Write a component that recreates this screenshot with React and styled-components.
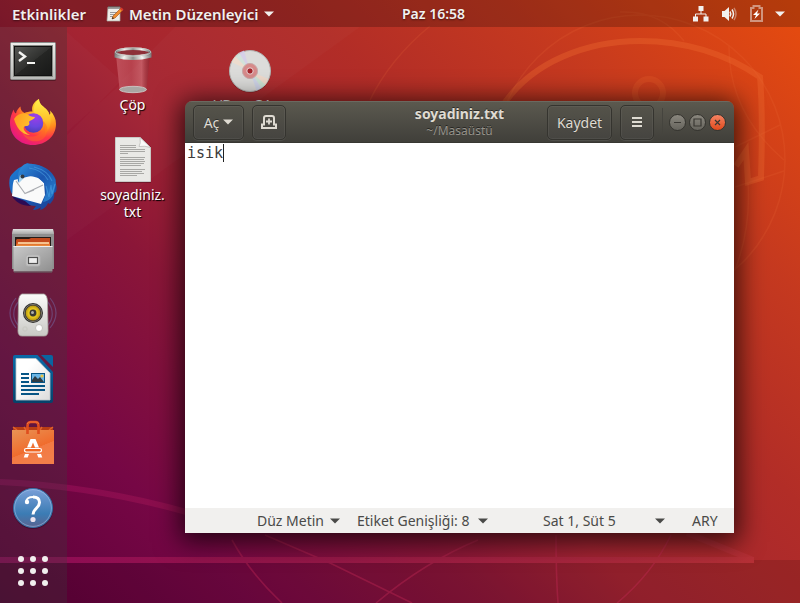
import React from "react";
import styled, { createGlobalStyle, css } from "styled-components";

const GlobalStyle = createGlobalStyle`
  * { box-sizing: border-box; }
  html, body, #root { height: 100%; margin: 0; }
  body { overflow: hidden; }
  body, button, select, textarea {
    font-family: "Noto Sans", "Open Sans", sans-serif;
    font-size: 14px;
  }
  button, select { margin: 0; padding: 0; border: 0; background: none; color: inherit; }
  svg { display: block; flex: none; }
`;

const Screen = styled.div`
  position: relative;
  display: flex;
  flex-direction: column;
  min-height: 100vh;
  background: linear-gradient(45deg, #5c0038 0%, #760745 18%, #8b1638 35%, #a42432 46%, #b22d27 64%, #c5391f 79%, #e74c0e 100%);
`;

const WallpaperArt = styled.svg`
  position: absolute;
  inset: 0;
  width: 100%;
  height: 100%;
`;

const TopBar = styled.header`
  position: relative;
  display: flex;
  align-items: center;
  height: 27px;
  background: rgba(0, 0, 0, 0.21);
  color: #f2f0ee;
  text-shadow: 0 1px 2px rgba(0, 0, 0, 0.5);
`;

const TopLeft = styled.div`
  display: flex;
  flex: none;
  align-items: center;
  gap: 20px;
  width: 50%;
  padding-left: 12px;
`;

const TopButton = styled.button`
  display: flex;
  align-items: center;
  gap: 5px;
  height: 27px;
  font-weight: 600;
  font-size: 15px;
  text-shadow: inherit;
  white-space: nowrap;
`;

const Clock = styled(TopButton)`
  padding-left: 2px;
  font-size: 14px;
`;

const StatusArea = styled.button`
  display: flex;
  align-items: center;
  gap: 12px;
  margin-left: auto;
  padding-right: 15px;
`;

const Body = styled.div`
  position: relative;
  display: flex;
  flex: 1;
`;

const Dock = styled.nav`
  display: flex;
  flex-direction: column;
  align-items: center;
  gap: 16px;
  width: 67px;
  padding: 8px 1px 8px 0;
  background: rgba(60, 60, 60, 0.3);
`;

const DockButton = styled.button`
  width: 48px;
  height: 48px;
`;

const Desktop = styled.main`
  position: relative;
  flex: 1;
  padding: 19px 7px;
`;

const IconGrid = styled.div`
  display: grid;
  grid-template-columns: repeat(2, 117px);
  grid-auto-rows: 90px;
`;

const DesktopItem = styled.button`
  display: flex;
  flex-direction: column;
  align-items: center;
  gap: 2px;
  height: 48px;
`;

const ItemLabel = styled.span`
  width: 76px;
  color: #fff;
  line-height: 17px;
  text-align: center;
  overflow-wrap: break-word;
  text-shadow: 1px 1px 1px #000;
`;

const Window = styled.section`
  position: absolute;
  top: 74px;
  right: 66px;
  bottom: 70px;
  left: 118px;
  display: flex;
  flex-direction: column;
  border-radius: 7px 7px 0 0;
  box-shadow: 0 4px 26px 5px rgba(0, 0, 0, 0.7);
  overflow: hidden;
`;

const HeaderBar = styled.div`
  display: grid;
  grid-template-columns: 1fr auto 1fr;
  align-items: center;
  height: 42px;
  padding: 0 8px;
  background: linear-gradient(#5b594f, #403f3a);
  border-top: 1px solid #6b6960;
  border-bottom: 1px solid #383732;
  color: #dfdbd2;
`;

const Group = styled.div`
  display: flex;
  align-items: center;
  gap: 8px;
  justify-content: ${(p) => (p.$end ? "flex-end" : "flex-start")};
`;

const HeaderButton = styled.button`
  display: flex;
  align-items: center;
  justify-content: center;
  gap: 4px;
  height: 35px;
  min-width: ${(p) => p.$width || 34}px;
  padding: 0 8px;
  border: 1px solid #35342f;
  border-radius: 5px;
  background: linear-gradient(#55534a, #454440);
  box-shadow: inset 0 0 0 1px rgba(255, 255, 255, 0.05), 0 1px 0 rgba(255, 255, 255, 0.08);
  color: #dfdbd2;
  text-shadow: 0 -1px 0 rgba(0, 0, 0, 0.4);
`;

const TitleBlock = styled.div`
  text-align: center;
  text-shadow: 0 -1px 0 rgba(0, 0, 0, 0.5);
`;

const Title = styled.h1`
  margin: 0;
  font-size: 14px;
  font-weight: 700;
  line-height: 18px;
`;

const Subtitle = styled.div`
  font-size: 12px;
  line-height: 16px;
  color: #95928a;
`;

const WindowControls = styled.div`
  display: flex;
  gap: 3px;
  padding-left: 6px;
  border-left: 1px solid #45443e;
  height: 28px;
  align-items: center;
`;

const WindowButton = styled.button`
  width: 17px;
  height: 17px;
  border-radius: 50%;
  border: 1px solid #35342f;
  background: linear-gradient(#8a877e, #66645d);
  ${(p) =>
    p.$close &&
    css`
      background: linear-gradient(#f58363, #df4a1c);
    `}
`;

const Editor = styled.div`
  display: grid;
  flex: 1;
  background: #fff;
`;

const editorText = css`
  grid-area: 1 / 1;
  margin: 0;
  padding: 1px 2px;
  font-family: "DejaVu Sans Mono", monospace;
  font-size: 15px;
  line-height: 18px;
`;

const TextBox = styled.textarea`
  ${editorText}
  width: 100%;
  height: 100%;
  border: 0;
  outline: 0;
  resize: none;
  background: transparent;
  color: #3c3c3c;
  caret-color: transparent;
`;

const CaretLine = styled.div`
  ${editorText}
  display: flex;
  align-items: flex-start;
  pointer-events: none;
`;

const Caret = styled.span`
  width: 1px;
  height: 18px;
  margin-left: 4ch;
  background: #222;
`;

const StatusBar = styled.footer`
  display: flex;
  align-items: center;
  justify-content: flex-end;
  height: 25px;
  padding-right: 14px;
  background: #f1f0ee;
  color: #4a4a48;
`;

const Picker = styled.label`
  display: flex;
  align-items: center;
  gap: 5px;
  margin-right: 17px;
`;

const PickerSelect = styled.select`
  appearance: none;
  width: ${(p) => p.$width}px;
  height: 24px;
  outline: 0;
`;

const PositionButton = styled.button`
  display: flex;
  align-items: center;
  justify-content: space-between;
  width: 122px;
  height: 24px;
  margin-left: 38px;
`;

const Mode = styled.span`
  width: 28px;
  margin-left: 27px;
`;

const Arrow = () => (
  <svg width="10" height="6" viewBox="0 0 10 6" aria-hidden="true">
    <path d="M0 .5h10L5 5.5z" fill="currentColor" />
  </svg>
);

const Wallpaper = () => (
  <WallpaperArt viewBox="0 0 800 603" preserveAspectRatio="xMidYMid slice" aria-hidden="true">
    <defs>
      <linearGradient id="beam" x1="0" x2="754" y1="0" y2="0" gradientUnits="userSpaceOnUse">
        <stop offset="0" stopColor="#8d0a56" />
        <stop offset=".45" stopColor="#971847" />
        <stop offset="1" stopColor="#b63036" />
      </linearGradient>
    </defs>
    <path d="M0 563H754V560H800V603H0z" fill="#000" opacity=".12" />
    <path d="M67 32L123 82 67 132zM175 27L67 135V240L360 27z" fill="#fff" opacity=".018" />
    <g fill="none" stroke="#f0703c" strokeWidth="1.5" opacity=".16">
      <circle cx="640" cy="160" r="145" />
      <path d="M370 100Q390 59 430 26M729 45Q728 112 784 160M735 147L780 125M735 187L784 171M748 183Q751 228 735 270M620 12Q660 10 684 41" />
    </g>
    <g fill="none" stroke="#c52a58" strokeWidth="1.6" opacity=".38">
      <path d="M232 540Q250 573 282 603M265 535L330 563 412 603M478 540Q425 562 376 603M556 535Q556 575 558 603M671 535Q652 574 617 603" />
    </g>
    <g fill="none" stroke="#ee6a30" strokeWidth="6" opacity=".38">
      <path d="M500 110C530 60 590 41 640 41C695 41 735 60 760 77Q763 110 761 178L748 182 746 151 736 166" />
      <circle cx="649" cy="93" r="14" opacity=".6" />
    </g>
    <path d="M0 560H754" stroke="url(#beam)" strokeWidth="6" />
    <path d="M0 482Q95 486 190 513M687 533L753 560" fill="none" stroke="url(#beam)" strokeWidth="6" opacity=".75" />
  </WallpaperArt>
);

const TerminalIcon = () => (
  <svg width="48" height="48" viewBox="0 0 48 48">
    <defs>
      <linearGradient id="termGlass" x1="0" y1="0" x2="1" y2="1">
        <stop offset="0" stopColor="#555653" /><stop offset=".5" stopColor="#30312f" /><stop offset=".51" stopColor="#252624" /><stop offset="1" stopColor="#181918" />
      </linearGradient>
      <linearGradient id="termFrame" x1="0" y1="0" x2="0" y2="1">
        <stop offset="0" stopColor="#eeeeec" /><stop offset="1" stopColor="#b9bab8" />
      </linearGradient>
    </defs>
    <rect x="1" y="8" width="46" height="38" rx="1.5" fill="#000" opacity=".3" />
    <rect x="1.5" y="7.5" width="45" height="37" rx="1" fill="url(#termFrame)" stroke="#8a8b89" />
    <rect x="4" y="10" width="40" height="32" fill="#888a85" />
    <rect x="5" y="11" width="38" height="30" fill="#111" />
    <rect x="6" y="12" width="36" height="28" fill="url(#termGlass)" />
    <path d="M10 17l6 4.500-6 4.500" fill="none" stroke="#f4f4f2" strokeWidth="2.400" />
    <path d="M18 28h8" stroke="#f4f4f2" strokeWidth="2" />
  </svg>
);

const FirefoxIcon = () => (
  <svg width="48" height="48" viewBox="0 0 48 48">
    <defs>
      <radialGradient id="ffBody" cx=".78" cy=".12" r="1">
        <stop offset="0" stopColor="#fff44f" /><stop offset=".28" stopColor="#ffc52b" /><stop offset=".5" stopColor="#ff8a1d" /><stop offset=".72" stopColor="#ff3647" /><stop offset="1" stopColor="#e31587" />
      </radialGradient>
      <linearGradient id="ffTail" x1=".5" y1="0" x2=".5" y2="1">
        <stop offset="0" stopColor="#fff24a" /><stop offset=".6" stopColor="#ffc02c" /><stop offset="1" stopColor="#ff8a18" stopOpacity=".2" />
      </linearGradient>
      <radialGradient id="ffGlobe" cx=".6" cy=".15" r=".9">
        <stop offset="0" stopColor="#a03ce8" /><stop offset=".6" stopColor="#6a46e0" /><stop offset="1" stopColor="#4a3bb0" />
      </radialGradient>
      <linearGradient id="ffHead" x1="0" y1="0" x2="1" y2=".4">
        <stop offset="0" stopColor="#ff9a1f" /><stop offset="1" stopColor="#ffc62e" />
      </linearGradient>
    </defs>
    <path d="M24 46C10.500 46 1 36.500 1 24c0-6 2-9.500 3.500-13.500C5 13 6 14 7 14.500 7.500 11.500 9.500 9 11.500 7.500c0 3 1 5 4 6.500 2-1 4.500-1.500 8-1.500C22 7.500 25 2.500 30 0c0 4.500 3 6.500 7 10 2 2 3 4 3.500 6.500 1-1.500 1-3 .5-5C45 15.500 47 20 47 25c0 12-10 21-23 21z" fill="url(#ffBody)" />
    <path d="M30 0c0 4.500 3 6.500 7 10 7 7 6 19-1 25 1-9-2-14-8-18-4-3-5-11 2-17z" fill="url(#ffTail)" />
    <circle cx="24.500" cy="24" r="9.800" fill="url(#ffGlobe)" />
    <path d="M5 20c3-5 9-7 13-5 2 2 5 3 8 3-1 3-5 3-6 5 1 2 0 4-3 4-4 0-3 6 4 9-9 0-14-9-16-16z" fill="url(#ffHead)" />
    <path d="M12 29c1 7 9 11 17 7 6-3 7-9 4-15 7 5 7 14 1 19-9 6-21 0-22-11z" fill="#ff7020" opacity=".45" />
  </svg>
);

const ThunderbirdIcon = () => (
  <svg width="48" height="48" viewBox="0 0 48 48">
    <defs>
      <linearGradient id="tbBird" x1="0" y1="0" x2="1" y2="1">
        <stop offset="0" stopColor="#1f7fd6" /><stop offset=".45" stopColor="#1b5fb8" /><stop offset="1" stopColor="#1c3f94" />
      </linearGradient>
      <linearGradient id="tbWing" x1="0" y1="0" x2="1" y2="1">
        <stop offset="0" stopColor="#2f8fdc" /><stop offset=".5" stopColor="#1b56b0" /><stop offset="1" stopColor="#2b8bd6" />
      </linearGradient>
    </defs>
    <path d="M1 14C5 8 10 4 15 3l3-3 3 1c12 0 22 6 26 16l-1 2c2 3 2 7 1 10l-2 1c1 4-1 8-4 11l-2-1c-1 3-4 6-8 7l1-3c-2 2-5 3-8 3l3-4C14 42 3 36 1 26c-1-4-1-8 0-12z" fill="url(#tbBird)" />
    <path d="M3 33l13 5 6 5C13 43 6 39 3 33z" fill="#2b0b54" />
    <path d="M5 17L26 12l9 8 1 12-4 9L3 33c1-6 0-11 2-16z" fill="#fafafa" />
    <path d="M7 18l9 12.500L34 22M16 30.500L25 27" fill="none" stroke="#a9abb0" strokeWidth="1.100" />
    <path d="M16 1c-5 3-8 8-7 19 2-4 4-7 9-7 5 0 11 1 14 4 4 3 5 7 5 13l-3 9c6-1 10-5 11-10l2-8c0-12-17-22-31-20z" fill="url(#tbWing)" />
    <path d="M20 5c8 1 15 5 19 12M25 4c8 2 15 6 18 14M37 23l3 11 2-12 1 9 3-10" fill="none" stroke="#51a9ea" strokeWidth="1.100" opacity=".5" />
    <path d="M11 12c-1 3-1 5-1 8l5-5z" fill="#a7d3ee" />
    <circle cx="13.500" cy="13.500" r="2" fill="#343a42" />
  </svg>
);

const FilesIcon = () => (
  <svg width="48" height="48" viewBox="0 0 48 48">
    <defs>
      <linearGradient id="cab" x1="0" y1="0" x2="1" y2="1">
        <stop offset="0" stopColor="#c9c9c9" /><stop offset="1" stopColor="#8f8f8f" />
      </linearGradient>
      <linearGradient id="slab" x1="0" y1="0" x2="0" y2="1">
        <stop offset="0" stopColor="#dedede" /><stop offset="1" stopColor="#a8a8a8" />
      </linearGradient>
      <linearGradient id="folder" x1="0" y1="0" x2="0" y2="1">
        <stop offset="0" stopColor="#d4491b" /><stop offset="1" stopColor="#f2a64a" />
      </linearGradient>
    </defs>
    <path d="M4 2h40l1 5v35H3V7z" fill="#8f8f8f" />
    <path d="M4 2h40l1 5H3z" fill="url(#slab)" />
    <rect x="6" y="10" width="36" height="10" fill="#241b18" />
    <path d="M7 13l1-1h12l2-1h19v9H7z" fill="#c34a1c" />
    <path d="M8 15h33v5H7z" fill="url(#folder)" />
    <path d="M9 16h31" stroke="#ffe5b2" strokeWidth="1.500" />
    <path d="M4.500 19h39v25.500h-39z" fill="url(#cab)" />
    <path d="M4.500 19.500h39" stroke="#eee" />
    <path d="M5 45h38" stroke="#666" />
    <rect x="17" y="28" width="14" height="11" rx="2" fill="#c8c8c8" stroke="#b2b2b2" />
    <rect x="19.500" y="30.500" width="9" height="6" fill="#eee" stroke="#505050" strokeWidth="1.200" />
  </svg>
);

const MusicIcon = () => (
  <svg width="48" height="48" viewBox="0 0 48 48">
    <defs>
      <linearGradient id="box" x1="0" y1="0" x2="0" y2="1">
        <stop offset="0" stopColor="#fbfbfa" /><stop offset="1" stopColor="#c9c9c5" />
      </linearGradient>
      <radialGradient id="cone">
        <stop offset="0" stopColor="#d1b21a" /><stop offset=".6" stopColor="#e6c81e" /><stop offset="1" stopColor="#b99712" />
      </radialGradient>
    </defs>
    <path d="M7 7C-1 17-1 27 7 37M10 10C3 18 3 28 10 35M41 7c8 10 8 20 0 30M38 10c7 8 7 18 0 25" fill="none" stroke="#7a86c8" strokeWidth="1.200" opacity=".38" />
    <path d="M13 3h22q3 1 3.500 7L39 40q0 5-4 5H13q-4 0-4-5L9.500 10Q10 4 13 3z" fill="url(#box)" stroke="#a8a8a2" strokeWidth=".8" />
    <circle cx="24" cy="22" r="10" fill="#30302e" />
    <circle cx="24" cy="22" r="8.600" fill="none" stroke="#77746c" />
    <circle cx="24" cy="22" r="7.400" fill="url(#cone)" />
    <circle cx="24" cy="22" r="3.400" fill="#393936" />
    <circle cx="23.500" cy="21.500" r="1.500" fill="#b0b0a8" />
    <circle cx="30" cy="37" r="3.500" fill="#fff" stroke="#b8b8b2" strokeWidth=".8" />
    <rect x="14" y="36" width="4" height="4" rx="1" fill="none" stroke="#c5c5be" strokeWidth=".8" />
  </svg>
);

const WriterIcon = () => (
  <svg width="48" height="48" viewBox="0 0 48 48">
    <defs>
      <linearGradient id="wr" x1="0" y1="0" x2="0" y2="1">
        <stop offset="0" stopColor="#0a6aa8" /><stop offset="1" stopColor="#06426a" />
      </linearGradient>
      <linearGradient id="paper" x1="0" y1="0" x2="1" y2="1">
        <stop offset=".3" stopColor="#fff" /><stop offset="1" stopColor="#dcdcdc" />
      </linearGradient>
    </defs>
    <path d="M6 0H28.500L44 17V46q0 2-2 2H6q-2 0-2-2V2q0-2 2-2z" fill="url(#wr)" />
    <path d="M32 0H42q2 0 2 2V12z" fill="#0a65a0" />
    <path d="M7 3.500H27L41 18V45H7z" fill="url(#paper)" stroke="#bcc5ca" strokeWidth=".8" />
    <path d="M12 19h8M12 23h8M12 27h8M12 31h24M12 35h24M12 39h18" stroke="#075585" strokeWidth="2" />
    <rect x="22.500" y="18.500" width="13" height="9" fill="#6bb6e6" stroke="#075585" />
    <circle cx="33" cy="21" r="1.600" fill="#e8c341" />
    <path d="M23 27v-2l3-4 3 3 2-2 4 5z" fill="#303c43" />
  </svg>
);

const SoftwareIcon = () => (
  <svg width="48" height="48" viewBox="0 0 48 48">
    <defs>
      <linearGradient id="bag" x1="0" y1="0" x2=".5" y2="1">
        <stop offset="0" stopColor="#e89355" /><stop offset=".65" stopColor="#f06c2d" /><stop offset=".66" stopColor="#f27a42" /><stop offset="1" stopColor="#f27e49" />
      </linearGradient>
    </defs>
    <path d="M4 8h40v4H4z" fill="#b83d14" />
    <path d="M4 8l4 3M44 8l-4 3M15 8l2 3M33 8l-2 3" stroke="#e0622f" strokeWidth="1.500" />
    <path d="M3 11h42v34H3z" fill="url(#bag)" />
    <path d="M18.500 15V7q0-4 3-4h5q3 0 3 4v8" fill="none" stroke="#df4d1d" strokeWidth="2.600" />
    <path d="M18 5q1-2 3-2h6q2 0 3 2" fill="none" stroke="#f0713d" strokeWidth="1" />
    <path d="M21.500 20h5l3.500 8.500h-4L24 23.500l-2 5h-4z" fill="#fff" />
    <path d="M16 35h4L18.700 38.500H14.700zM28 35h4l1.300 3.500h-4z" fill="#fff" />
    <rect x="15.500" y="29.500" width="17" height="3.500" rx="1.700" fill="#ef6520" stroke="#fff" strokeWidth="1.200" />
  </svg>
);

const HelpIcon = () => (
  <svg width="48" height="48" viewBox="0 0 48 48">
    <defs>
      <linearGradient id="help" x1="0" y1="0" x2="0" y2="1">
        <stop offset="0" stopColor="#7b9fd8" /><stop offset=".65" stopColor="#3b7cb4" /><stop offset="1" stopColor="#5b6390" />
      </linearGradient>
    </defs>
    <circle cx="24" cy="26" r="20" fill="#1b0720" opacity=".35" />
    <circle cx="24" cy="25" r="19.500" fill="url(#help)" stroke="#3570a5" />
    <circle cx="24" cy="25" r="18.400" fill="none" stroke="#a5c4ea" strokeWidth=".9" opacity=".6" />
    <path d="M17 19c.5-4 3.500-5 7-5" fill="none" stroke="#fff" strokeWidth="1.800" />
    <path d="M24 14c4 0 6.500 2 6.500 5.500 0 5.500-6.500 6-6.500 12" fill="none" stroke="#fff" strokeWidth="3" />
    <circle cx="18" cy="19" r="2.200" fill="#fff" />
    <circle cx="24" cy="36.500" r="2.600" fill="#ebe3ee" />
  </svg>
);

const AppsIcon = () => (
  <svg width="48" height="48" viewBox="0 0 48 48" fill="#f1efee">
    {[12, 24, 36].map((y) => [12, 24, 36].map((x) => <circle key={`${x}-${y}`} cx={x} cy={y} r="3" />))}
  </svg>
);

const TrashIcon = () => (
  <svg width="48" height="48" viewBox="0 0 48 48">
    <defs>
      <linearGradient id="glass" x1="0" x2="1" y1="0" y2="0">
        <stop offset="0" stopColor="#d87880" stopOpacity=".5" /><stop offset=".45" stopColor="#d87880" stopOpacity=".35" /><stop offset=".75" stopColor="#e08a90" stopOpacity=".5" /><stop offset="1" stopColor="#702028" stopOpacity=".3" />
      </linearGradient>
      <linearGradient id="rim" x1="0" x2="1" y1="0" y2="0">
        <stop offset="0" stopColor="#777" /><stop offset=".25" stopColor="#f2f2ef" /><stop offset=".5" stopColor="#8f8f8b" /><stop offset=".75" stopColor="#f5f5f2" /><stop offset="1" stopColor="#777" />
      </linearGradient>
    </defs>
    <path d="M7 9l3.500 34q13 6 27 0L41 9z" fill="url(#glass)" />
    <ellipse cx="24" cy="43.500" rx="13.500" ry="3.200" fill="#aaa6a3" stroke="#d2cfcd" strokeWidth=".8" />
    <path d="M5.500 6.500v5q18 5 37 0v-5z" fill="url(#rim)" />
    <ellipse cx="24" cy="6.500" rx="17" ry="3.700" fill="#8d3038" stroke="url(#rim)" strokeWidth="2.500" />
    <ellipse cx="24" cy="6" rx="18" ry="4.200" fill="none" stroke="#c9c9c5" strokeWidth=".8" />
  </svg>
);

const DiscIcon = () => (
  <svg width="48" height="48" viewBox="0 0 48 48">
    <circle cx="24" cy="25.500" r="21" fill="#000" opacity=".25" />
    <circle cx="24" cy="25" r="20.500" fill="#dcdcda" stroke="#b4b4b2" />
    <g opacity=".75">
      <path d="M24 25L5.500 16 9 10z" fill="#f2dccb" />
      <path d="M24 25L9 10l4-3.500z" fill="#cfe6da" />
      <path d="M24 25L13 6.500l5-2z" fill="#d5cdec" />
      <path d="M24 25l18.500 8-3 6z" fill="#f5d9c6" />
      <path d="M24 25l15.500 14-4 3z" fill="#c8e6d2" />
      <path d="M24 25l11.500 17-5 2.500z" fill="#cbd2ec" />
    </g>
    <circle cx="24" cy="25" r="7.600" fill="#d78a8a" stroke="#c8a8a8" />
    <circle cx="24" cy="25" r="3.200" fill="#a5252c" stroke="#e9dada" strokeWidth="1" />
  </svg>
);

const FileIcon = () => (
  <svg width="48" height="48" viewBox="0 0 48 48">
    <path d="M6 1h25l11 10v36H6z" fill="#000" opacity=".25" />
    <path d="M6.500 1.500h24.500L41.500 11.500v34h-35z" fill="#e9e9e6" stroke="#c9c9c6" />
    <path d="M31 1.500q1 6-1 9 6-1 11.500 1z" fill="#fbfbfa" stroke="#bdbdba" strokeWidth=".8" />
    <path d="M11 9.500h16M11 11.500h16M11 13.500h25M11 15.500h25M11 17.500h8M11 21.500h25M11 23.500h24M11 25.500h25M11 27.500h24M11 29.500h21M11 33.500h25M11 35.500h22M11 37.500h24M11 39.500h17" stroke="#a8a8a5" />
  </svg>
);

const NotepadIcon = () => (
  <svg width="18" height="18" viewBox="0 0 18 18">
    <path d="M2 2h12v14H1z" fill="#eeeeea" stroke="#aaa9a2" strokeWidth=".7" />
    <path d="M3 1v3M5 1v3M7 1v3M9 1v3M11 1v3M13 1v3" stroke="#4b4b49" strokeWidth="1" />
    <path d="M4 7.500h7M4 9.500h5M4 11.500h3" stroke="#999" />
    <path d="M6 14l1-3 8-8 2 2-8 8z" fill="#f09030" stroke="#9b4b15" strokeWidth=".6" />
    <path d="M14 4l1.500-1.500 2 2L16 6z" fill="#d93a2c" />
    <path d="M6 14l.7-2 1.300 1.300z" fill="#222" />
  </svg>
);

const NetworkIcon = () => (
  <svg width="16" height="16" viewBox="0 0 16 16" fill="#f2f0ee">
    <path d="M5.500 0h5v5h-5zM0 10.500h5v5H0zM10.500 10.500h5v5h-5z" />
    <path d="M8 5v3M2.500 11V8h10.500v3" fill="none" stroke="#f2f0ee" />
  </svg>
);

const VolumeIcon = () => (
  <svg width="17" height="16" viewBox="0 0 17 16" fill="none" stroke="#f2f0ee" strokeWidth="1.500">
    <path d="M1 5h2.500L8 1v14l-4.500-4H1z" fill="#f2f0ee" stroke="none" />
    <path d="M9 5.500q1.500 2.500 0 5M11 3.500q3 4.500 0 9" />
    <path d="M13 2q4 6 0 12" opacity=".4" />
  </svg>
);

const BatteryIcon = () => (
  <svg width="13" height="17" viewBox="0 0 13 17">
    <path d="M1 3h2.500V1h6v2H12v13H1z" fill="none" stroke="#f2f0ee" strokeWidth="2" opacity=".5" />
    <path d="M8.500 4.500L3 10h3l-1.500 4L10 8.500H7z" fill="#fff" />
  </svg>
);

const NewTabIcon = () => (
  <svg width="16" height="16" viewBox="0 0 16 16" fill="none" stroke="#dfdbd2">
    <path d="M1 14V10.500H3V4Q3 2 5 2H11Q13 2 13 4V10.500H15V14z" strokeWidth="2" />
    <path d="M8 4.500v6M5 7.500h6" strokeWidth="1.800" />
  </svg>
);

const MenuIcon = () => (
  <svg width="10" height="10" viewBox="0 0 10 10" stroke="#dfdbd2" strokeWidth="2">
    <path d="M0 1h10M0 5h10M0 9h10" />
  </svg>
);

const ControlGlyph = ({ d }) => (
  <svg width="15" height="15" viewBox="0 0 15 15" fill="none" stroke="#3a3833" strokeWidth="1.200">
    <path d={d} />
  </svg>
);

const launchers = [
  ["Uçbirim", TerminalIcon],
  ["Firefox", FirefoxIcon],
  ["Thunderbird", ThunderbirdIcon],
  ["Dosyalar", FilesIcon],
  ["Rhythmbox", MusicIcon],
  ["LibreOffice Writer", WriterIcon],
  ["Ubuntu Yazılımları", SoftwareIcon],
  ["Yardım", HelpIcon],
  ["Uygulamaları Göster", AppsIcon],
];

const desktopItems = [
  ["Çöp", TrashIcon],
  ["VBox_GAs_", DiscIcon],
  ["soyadiniz. txt", FileIcon],
];

export default function App() {
  return (
    <Screen>
      <GlobalStyle />
      <Wallpaper />
      <TopBar>
        <TopLeft>
          <TopButton>Etkinlikler</TopButton>
          <TopButton>
            <NotepadIcon />
            Metin Düzenleyici
            <Arrow />
          </TopButton>
        </TopLeft>
        <Clock>Paz 16:58</Clock>
        <StatusArea aria-label="Sistem">
          <NetworkIcon />
          <VolumeIcon />
          <BatteryIcon />
          <Arrow />
        </StatusArea>
      </TopBar>
      <Body>
        <Dock aria-label="Uygulamalar">
          {launchers.map(([name, Icon]) => (
            <DockButton key={name} aria-label={name}>
              <Icon />
            </DockButton>
          ))}
        </Dock>
        <Desktop>
          <IconGrid>
            {desktopItems.map(([name, Icon]) => (
              <DesktopItem key={name}>
                <Icon />
                <ItemLabel>{name}</ItemLabel>
              </DesktopItem>
            ))}
          </IconGrid>
          <Window aria-label="soyadiniz.txt">
            <HeaderBar>
              <Group>
                <HeaderButton $width={51}>
                  Aç
                  <Arrow />
                </HeaderButton>
                <HeaderButton aria-label="Yeni sekme">
                  <NewTabIcon />
                </HeaderButton>
              </Group>
              <TitleBlock>
                <Title>soyadiniz.txt</Title>
                <Subtitle>~/Masaüstü</Subtitle>
              </TitleBlock>
              <Group $end>
                <HeaderButton $width={65}>Kaydet</HeaderButton>
                <HeaderButton aria-label="Menü">
                  <MenuIcon />
                </HeaderButton>
                <WindowControls>
                  <WindowButton aria-label="Küçült">
                    <ControlGlyph d="M4 7.500h7" />
                  </WindowButton>
                  <WindowButton aria-label="Büyüt">
                    <ControlGlyph d="M4 4h7v7H4z" />
                  </WindowButton>
                  <WindowButton $close aria-label="Kapat">
                    <ControlGlyph d="M5 5l5 5M10 5l-5 5" />
                  </WindowButton>
                </WindowControls>
              </Group>
            </HeaderBar>
            <Editor>
              <TextBox aria-label="Belge" defaultValue="isik" spellCheck={false} />
              <CaretLine aria-hidden="true">
                <Caret />
              </CaretLine>
            </Editor>
            <StatusBar>
              <Picker>
                <PickerSelect $width={68} aria-label="Sözdizimi">
                  <option>Düz Metin</option>
                </PickerSelect>
                <Arrow />
              </Picker>
              <Picker>
                <PickerSelect $width={116} aria-label="Sekme genişliği">
                  <option>Etiket Genişliği: 8</option>
                </PickerSelect>
                <Arrow />
              </Picker>
              <PositionButton>
                Sat 1, Süt 5
                <Arrow />
              </PositionButton>
              <Mode>ARY</Mode>
            </StatusBar>
          </Window>
        </Desktop>
      </Body>
    </Screen>
  );
}
